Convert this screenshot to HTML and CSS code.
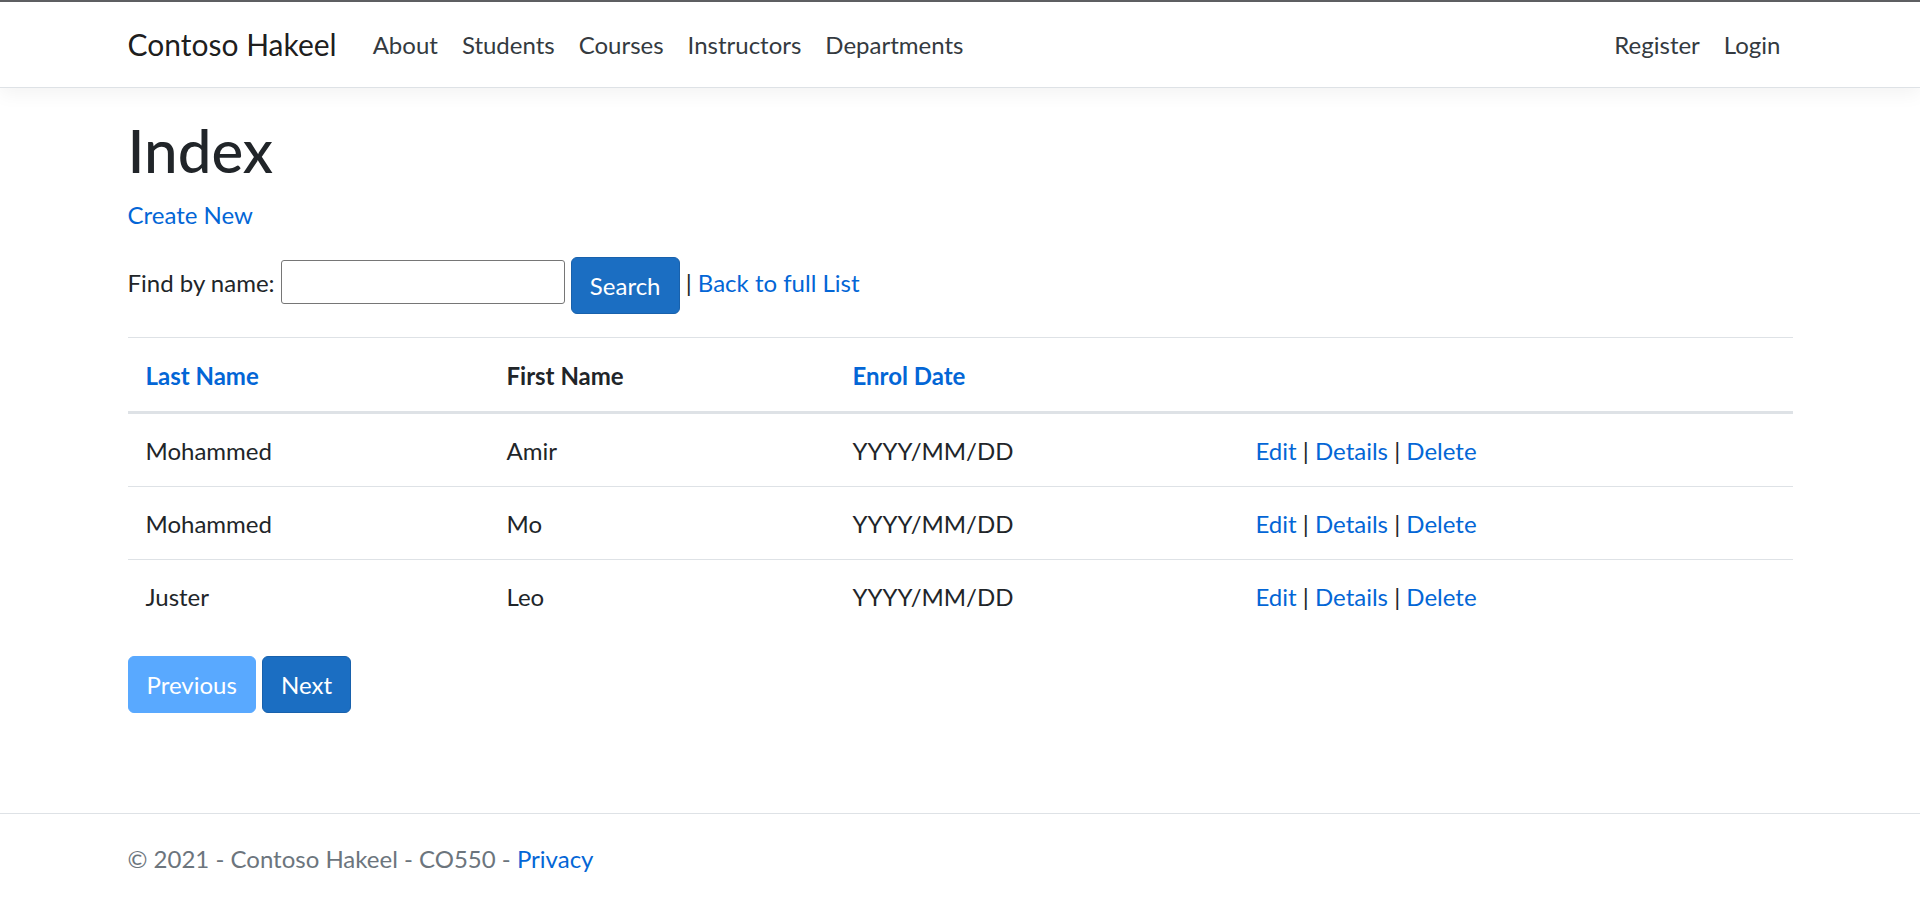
FILE: index.html
```html
<!DOCTYPE html>
<html lang="en">
<head>
<meta charset="utf-8">
<title>Index - Contoso Hakeel</title>
<link rel="stylesheet" href="styles.css">
</head>
<body>
<div class="topline"></div>
<header>
  <nav class="navbar">
    <div class="container nav-inner">
      <a class="brand" href="#">Contoso Hakeel</a>
      <ul class="nav-list">
        <li><a class="nav-link" href="#">About</a></li>
        <li><a class="nav-link" href="#">Students</a></li>
        <li><a class="nav-link" href="#">Courses</a></li>
        <li><a class="nav-link" href="#">Instructors</a></li>
        <li><a class="nav-link" href="#">Departments</a></li>
      </ul>
      <ul class="nav-list nav-right">
        <li><a class="nav-link" href="#">Register</a></li>
        <li><a class="nav-link" href="#">Login</a></li>
      </ul>
    </div>
  </nav>
</header>
<div class="container">
  <main class="main">
    <h1 class="title">Index</h1>
    <p class="para"><a href="#">Create New</a></p>
    <form class="search-form">
      <p class="para search-row">Find by name: <input type="text" class="search-input"> <input type="submit" value="Search" class="btn btn-primary"> | <a href="#">Back to full List</a></p>
    </form>
    <table class="table">
      <thead>
        <tr>
          <th class="c1"><a href="#">Last Name</a></th>
          <th class="c2">First Name</th>
          <th class="c3"><a href="#">Enrol Date</a></th>
          <th class="c4"></th>
        </tr>
      </thead>
      <tbody>
        <tr>
          <td>Mohammed</td>
          <td>Amir</td>
          <td>YYYY/MM/DD</td>
          <td><a href="#">Edit</a> | <a href="#">Details</a> | <a href="#">Delete</a></td>
        </tr>
        <tr>
          <td>Mohammed</td>
          <td>Mo</td>
          <td>YYYY/MM/DD</td>
          <td><a href="#">Edit</a> | <a href="#">Details</a> | <a href="#">Delete</a></td>
        </tr>
        <tr>
          <td>Juster</td>
          <td>Leo</td>
          <td>YYYY/MM/DD</td>
          <td><a href="#">Edit</a> | <a href="#">Details</a> | <a href="#">Delete</a></td>
        </tr>
      </tbody>
    </table>
    <div class="pager"><a href="#" class="btn btn-disabled">Previous</a> <a href="#" class="btn btn-primary">Next</a></div>
  </main>
</div>
<footer class="footer">
  <div class="container">&copy; 2021 - Contoso Hakeel - CO550 - <a href="#">Privacy</a></div>
</footer>
</body>
</html>
```
FILE: styles.css
```css
html, body {
  margin: 0;
  padding: 0;
  height: 100%;
}
body {
  position: relative;
  font-family: "Segoe UI", Lato, Roboto, "Liberation Sans", sans-serif;
  font-size: 24px;
  line-height: 36px;
  color: #212529;
  background: #fff;
  overflow: hidden;
}
a {
  color: #0366d6;
  text-decoration: none;
}
.topline {
  height: 2px;
  background: #5f6063;
}
.navbar {
  background: #fff;
  border-bottom: 1px solid #dee2e6;
  box-shadow: 0 6px 18px rgba(0, 0, 0, 0.05);
  height: 85px;
  display: flex;
  align-items: center;
  margin-bottom: 24px;
}
.container {
  width: 1665px;
  margin: 0 auto;
}
.nav-inner {
  display: flex;
  align-items: center;
}
.brand {
  font-size: 30px;
  line-height: 45px;
  color: rgba(0, 0, 0, 0.9);
  margin-right: 24px;
}
.nav-list {
  list-style: none;
  margin: 0;
  padding: 0;
  display: flex;
}
.nav-right {
  margin-left: auto;
}
.nav-link {
  display: block;
  padding: 12px 12px;
  color: #343a40;
}
.main {
  padding-bottom: 24px;
}
.title {
  font-size: 60px;
  line-height: 72px;
  font-weight: 500;
  margin: 0 0 11px;
  padding-top: 2px;
}
.para {
  margin: 0 0 24px;
}
.search-row {
  margin-bottom: 23px;
}
.search-form {
  margin: 0;
}
.search-input {
  box-sizing: border-box;
  width: 284px;
  height: 44px;
  border: 1px solid #767676;
  border-radius: 3px;
  font: inherit;
  padding: 1px 3px;
  vertical-align: baseline;
  margin: 0;
}
.btn {
  display: inline-block;
  box-sizing: border-box;
  font: inherit;
  font-size: 24px;
  line-height: 36px;
  padding: 9.5px 18px;
  border: 1px solid transparent;
  border-radius: 6px;
  vertical-align: middle;
  color: #fff;
  margin: 0;
  cursor: pointer;
}
.btn-primary {
  background: #1b6ec2;
  border-color: #1861ac;
}
.btn-disabled {
  background: #59a9ff;
  border-color: #59a9ff;
}
.table {
  width: 100%;
  border-collapse: collapse;
  margin-bottom: 24px;
}
.table th, .table td {
  padding: 18px;
  text-align: left;
  vertical-align: top;
  border-top: 1px solid #dee2e6;
}
.table td {
  padding-top: 19px;
  padding-bottom: 17px;
}
.table thead th {
  vertical-align: bottom;
  border-bottom: 3px solid #dee2e6;
  font-weight: 700;
  padding-top: 20px;
  padding-bottom: 17px;
}
.c1 { width: 325px; }
.c2 { width: 310px; }
.c3 { width: 367px; }
.footer {
  position: absolute;
  left: 0;
  right: 0;
  bottom: 0;
  padding-top: 3px;
  line-height: 84px;
  border-top: 1px solid #dee2e6;
  color: #6c757d;
  white-space: nowrap;
}
```
